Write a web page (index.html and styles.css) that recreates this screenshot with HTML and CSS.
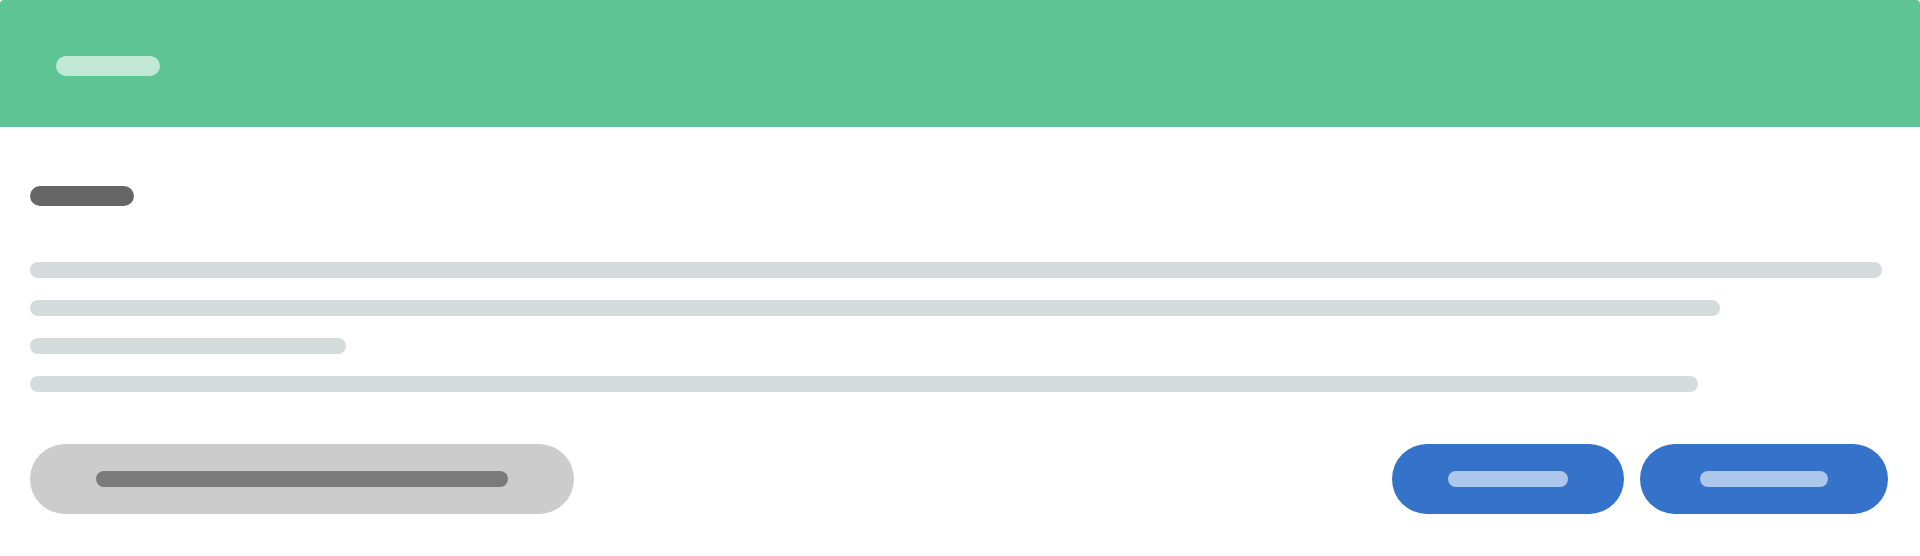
FILE: index.html
```html
<!DOCTYPE html>
<html lang="en">
<head>
    <meta charset="UTF-8">
    <meta name="viewport" content="width=device-width, initial-scale=1.0">
    <title>Dialog</title>
    <link rel="stylesheet" href="styles.css">
</head>
<body>
    <div class="dialog">
        <div class="dialog-header">
            <span class="bar bar-header"></span>
        </div>
        <div class="dialog-body">
            <span class="bar bar-title"></span>
            <div class="text-lines">
                <span class="bar line line-1"></span>
                <span class="bar line line-2"></span>
                <span class="bar line line-3"></span>
                <span class="bar line line-4"></span>
            </div>
            <div class="actions">
                <button class="btn btn-grey"><span class="bar bar-btn-grey"></span></button>
                <div class="actions-right">
                    <button class="btn btn-blue btn-ok"><span class="bar bar-btn-blue"></span></button>
                    <button class="btn btn-blue btn-next"><span class="bar bar-btn-blue"></span></button>
                </div>
            </div>
        </div>
    </div>
</body>
</html>
```

FILE: styles.css
```css
        body {
            font-family: 'Liberation Sans', Arial, sans-serif;
            background: white;
            margin: 0;
            padding: 0;
        }

        .dialog {
            width: 100%;
            height: 556px;
            background-color: white;
        }

        .dialog-header {
            height: 127px;
            box-sizing: border-box;
            padding: 56px 0 0 56px;
            background-color: #5fc494;
            border-radius: 4px 4px 0 0;
        }

        .bar {
            display: block;
            height: 16px;
            border-radius: 8px;
        }

        .bar-header {
            width: 104px;
            height: 20px;
            border-radius: 10px;
            background-color: #c1e8d5;
        }

        .dialog-body {
            padding: 59px 32px 0 30px;
        }

        .bar-title {
            width: 104px;
            height: 20px;
            border-radius: 10px;
            background-color: #666666;
        }

        .text-lines {
            display: flex;
            flex-direction: column;
            gap: 22px;
            margin-top: 56px;
        }

        .line {
            background-color: #d5dadb;
        }

        .line-1 { width: 1852px; }
        .line-2 { width: 1690px; }
        .line-3 { width: 316px; }
        .line-4 { width: 1668px; }

        .actions {
            display: flex;
            justify-content: space-between;
            align-items: center;
            margin-top: 52px;
        }

        .actions-right {
            display: flex;
            gap: 16px;
        }

        .btn {
            display: flex;
            align-items: center;
            height: 70px;
            border: none;
            border-radius: 35px;
            cursor: pointer;
        }

        .btn-grey {
            padding: 0 66px;
            background-color: #cccccc;
        }

        .bar-btn-grey {
            width: 412px;
            background-color: #7a7a7a;
        }

        .btn-blue {
            background-color: #3473c9;
        }

        .bar-btn-blue {
            background-color: #adc6eb;
        }

        .btn-ok {
            padding: 0 56px;
        }

        .btn-ok .bar-btn-blue {
            width: 120px;
        }

        .btn-next {
            padding: 0 60px;
        }

        .btn-next .bar-btn-blue {
            width: 128px;
        }
```
